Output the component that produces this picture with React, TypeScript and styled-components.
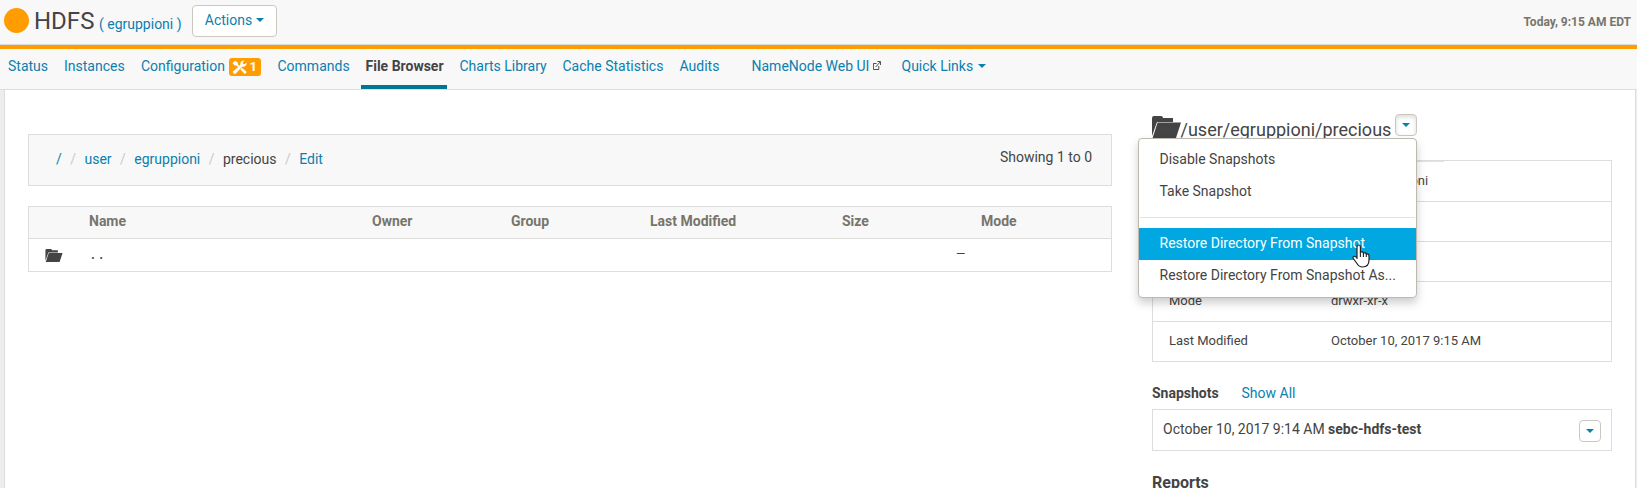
import React from "react";
import styled, { createGlobalStyle, css } from "styled-components";

const C = {
  link: "#0b7fad",
  text: "#444444",
  border: "#dddddb",
  orange: "#ff9c00",
  bar: "#f8f8f8",
};

const Global = createGlobalStyle`
  * { box-sizing: border-box; }
  html, body { margin: 0; padding: 0; height: 100%; overflow: hidden; }
  body {
    background: #eceeee;
    color: ${C.text};
    font: 14px/20px Roboto, "Liberation Sans", sans-serif;
    white-space: nowrap;
  }
`;

const Page = styled.div`
  height: 488px;
  overflow: hidden;
  display: flex;
  flex-direction: column;
`;

const Header = styled.header`
  height: 49px;
  flex: none;
  display: flex;
  align-items: flex-start;
  background: ${C.bar};
  border-bottom: 4px solid ${C.orange};
  box-shadow: inset 0 -1px 0 #dcdcdc;
  padding: 0 6px 0 4px;
`;

const StatusDot = styled.span`
  width: 25px;
  height: 25px;
  margin-top: 8px;
  border-radius: 50%;
  background: ${C.orange};
`;

const Title = styled.h1`
  margin: 6px 0 0 5px;
  width: 65px;
  font-size: 24px;
  line-height: 30px;
  font-weight: 400;
`;

const Cluster = styled.a`
  margin-top: 14px;
  width: 93px;
  color: ${C.link};
`;

const ActionsButton = styled.button`
  width: 85px;
  height: 32px;
  margin-top: 5px;
  padding: 0 0 2px;
  display: flex;
  align-items: center;
  justify-content: center;
  gap: 4px;
  border: 1px solid #cbc8bf;
  border-radius: 4px;
  background: #fff;
  color: ${C.link};
  font: inherit;
`;

const Caret = styled.span`
  border: 4px solid transparent;
  border-top-color: ${C.link};
  border-bottom: 0;
`;

const Clock = styled.span`
  margin: 13px 0 0 auto;
  font-size: 12px;
  line-height: 18px;
  font-weight: 700;
  color: #77756b;
`;

const Nav = styled.nav`
  height: 41px;
  flex: none;
  display: flex;
  padding-left: 3px;
  background: ${C.bar};
  border-bottom: 1px solid ${C.border};
`;

const NavItem = styled.a<{ $w: number; $active?: boolean }>`
  width: ${(p) => p.$w}px;
  height: 40px;
  padding: 7px 0 0 5px;
  display: flex;
  align-items: flex-start;
  color: ${C.link};
  ${(p) =>
    p.$active &&
    css`
      padding-left: 4.5px;
      color: ${C.text};
      font-weight: 700;
      border-bottom: 4px solid #007594;
    `}
`;

const NavGap = styled.span<{ $w: number }>`
  width: ${(p) => p.$w}px;
`;

const Badge = styled.span`
  width: 32px;
  height: 18px;
  margin: 2px 0 0 4px;
  padding: 0 4px 0 3px;
  display: flex;
  align-items: center;
  justify-content: space-between;
  border-radius: 3px;
  background: ${C.orange};
  color: #fff;
  font-weight: 700;
  font-size: 13px;
  line-height: 18px;
`;

const Main = styled.main`
  flex: 1;
  min-height: 0;
  margin: 0 1px 0 4px;
  display: flex;
  background: #fff;
  border: solid ${C.border};
  border-width: 0 1px;
`;

const Browser = styled.section`
  width: 1084px;
  margin: 44px 0 0 23px;
`;

const Crumbs = styled.div`
  height: 52px;
  padding: 14px 19px 0 27px;
  display: flex;
  background: ${C.bar};
  border: 1px solid ${C.border};
`;

const Crumb = styled.a<{ $plain?: boolean }>`
  color: ${(p) => (p.$plain ? C.text : C.link)};
`;

const Slash = styled.span`
  width: 22.7px;
  text-align: center;
  color: #ccc9c2;
`;

const Showing = styled.span`
  margin: -2px 0 0 auto;
`;

const FileTable = styled.div`
  margin-top: 20px;
  border: 1px solid ${C.border};
`;

const FileRow = styled.div<{ $head?: boolean }>`
  height: 32px;
  display: grid;
  grid-template-columns: 60px 283px 139px 139px 192px 139px 1fr;
  ${(p) =>
    p.$head &&
    css`
      background: ${C.bar};
      border-bottom: 1px solid ${C.border};
      color: #77756b;
      font-weight: 700;
    `}
`;

const Cell = styled.span`
  padding-top: 4px;
`;

const ParentCell = styled(Cell)`
  padding: 5px 0 0 2px;
  font-weight: 500;
  word-spacing: 1px;
`;

const DashCell = styled(Cell)`
  padding: 5px 0 0 114px;
  font-size: 12px;
`;

const Side = styled.aside`
  width: 460px;
  margin: 24px 0 0 40px;
`;

const PathRow = styled.div`
  position: relative;
  height: 46px;
  display: flex;
  align-items: flex-start;
`;

const IconFolder = styled.span`
  margin-top: 2px;
  line-height: 0;
`;

const PathText = styled.h2`
  margin: 5px 0 0 -0.5px;
  width: 214.5px;
  font-size: 18px;
  line-height: 22px;
  font-weight: 400;
`;

const CaretButton = styled.button<{ $open?: boolean }>`
  width: 22px;
  height: 22px;
  padding: 0;
  display: flex;
  align-items: center;
  justify-content: center;
  border: 1px solid #cbc8bf;
  border-radius: 4px;
  background: #fff;
  ${(p) => p.$open && css`box-shadow: inset 0 2px 4px rgba(0, 0, 0, 0.15);`}
`;

const Menu = styled.ul`
  position: absolute;
  z-index: 2;
  left: -14px;
  top: 24px;
  width: 279px;
  height: 160px;
  margin: 0;
  padding: 5px 0;
  list-style: none;
  background: #fff;
  border: 1px solid #bdb9b0;
  border-radius: 4px;
  box-shadow: 0 5px 10px rgba(0, 0, 0, 0.2);
`;

const MenuItem = styled.li<{ $hot?: boolean }>`
  height: 32px;
  padding: 5px 20.5px;
  ${(p) => p.$hot && css`background: #00a7e0; color: #fff;`}
`;

const Divider = styled.li`
  height: 1px;
  margin: 9px 1px 10px;
  background: #e3e3e0;
`;

const Pointer = styled.svg`
  position: absolute;
  z-index: 3;
  left: 200px;
  top: 130px;
`;

const Details = styled.div`
  border: 1px solid ${C.border};
`;

const DetailMark = styled.div`
  width: 291px;
  height: 1px;
  margin-bottom: -1px;
  background: #e2e1dc;
`;

const DetailRow = styled.div`
  height: 40px;
  padding: 10px 0 0 16px;
  display: grid;
  grid-template-columns: 162px 1fr;
  font-size: 13px;
  & + & { border-top: 1px solid ${C.border}; padding-top: 9px; }
`;

const SnapHead = styled.div`
  margin-top: 21px;
  display: flex;
`;

const SnapTitle = styled.strong`
  width: 89.5px;
`;

const SnapLink = styled.a`
  color: ${C.link};
`;

const Snapshot = styled.div`
  height: 42px;
  margin-top: 6px;
  padding: 9px 10px 0;
  display: flex;
  justify-content: space-between;
  border: 1px solid ${C.border};
  & > button { margin-top: 1px; }
`;

const Reports = styled.h3`
  margin: 21px 0 0;
  font-size: 16px;
  line-height: 22px;
`;

const Folder = ({ w, h }: { w: number; h: number }) => (
  <svg width={w} height={h} viewBox="0 0 29 22">
    <path fill="#444" d="M0 20V2Q0 0 2 0H9Q11 0 11 2H21V6H5Z" />
    <path fill="#444" d="M5.6 6.6H29L24 22H.6Z" />
  </svg>
);

const SmallFolder = styled.span`
  padding: 10px 0 0 16px;
  line-height: 0;
`;

const Tools = () => (
  <svg width="15" height="14" viewBox="0 0 15 14">
    <path
      fill="#fff"
      d="M.5 3L3 .8L5.8 2.6V4.2L7.8 6L6.3 7.5L4.4 5.5H2.7ZM8.3 9.2L9.8 7.8L14.5 11.8V12.6L13.3 13.8H12.5Z"
    />
    <path
      fill="#fff"
      d="M1 11.4L8.3 5.1Q7.9 2.4 9.9 1Q11.2.2 12.6.5L10.8 2.3L11.2 3.9L12.8 4.2L14.5 2.5Q14.9 4.2 13.6 5.7Q12.1 7.1 10 6.7L3.6 13.7Q2.6 14.3 1.6 13.3Q.5 12.3 1 11.4Z"
    />
  </svg>
);

const External = () => (
  <svg width="8" height="9" viewBox="0 0 9 9" preserveAspectRatio="none" fill="none" stroke="#444">
    <path d="M4 2.5H.5V8.5H6.5V5M3 6L8 1M5 .5H8.5V4" />
  </svg>
);

const IconSlot = styled.span`
  margin: 5px 0 0 4px;
  line-height: 0;
`;

const CaretSlot = styled.span`
  margin: 8px 0 0 5px;
  line-height: 0;
  display: flex;
`;

const columns = ["", "Name", "Owner", "Group", "Last Modified", "Size", "Mode"];
const details = [
  ["Parent", "/user/egruppioni"],
  ["Owner", "egruppioni"],
  ["Group", "egruppioni"],
  ["Mode", "drwxr-xr-x"],
  ["Last Modified", "October 10, 2017 9:15 AM"],
];

export default function App() {
  return (
    <Page>
      <Global />
      <Header>
        <StatusDot />
        <Title>HDFS</Title>
        <Cluster>( egruppioni )</Cluster>
        <ActionsButton>
          Actions <Caret />
        </ActionsButton>
        <Clock>Today, 9:15 AM EDT</Clock>
      </Header>
      <Nav>
        <NavItem $w={56}>Status</NavItem>
        <NavItem $w={77}>Instances</NavItem>
        <NavItem $w={136.5}>
          Configuration
          <Badge>
            <Tools />1
          </Badge>
        </NavItem>
        <NavItem $w={88.5}>Commands</NavItem>
        <NavItem $w={86} $active>File Browser</NavItem>
        <NavGap $w={7.5} />
        <NavItem $w={103}>Charts Library</NavItem>
        <NavItem $w={117}>Cache Statistics</NavItem>
        <NavItem $w={72}>Audits</NavItem>
        <NavItem $w={150}>
          NameNode Web UI
          <IconSlot><External /></IconSlot>
        </NavItem>
        <NavItem $w={100}>
          Quick Links
          <CaretSlot><Caret /></CaretSlot>
        </NavItem>
      </Nav>
      <Main>
        <Browser>
          <Crumbs>
            <Crumb>/</Crumb>
            <Slash>/</Slash>
            <Crumb>user</Crumb>
            <Slash>/</Slash>
            <Crumb>egruppioni</Crumb>
            <Slash>/</Slash>
            <Crumb $plain>precious</Crumb>
            <Slash>/</Slash>
            <Crumb>Edit</Crumb>
            <Showing>Showing 1 to 0</Showing>
          </Crumbs>
          <FileTable>
            <FileRow $head>
              {columns.map((c) => (
                <Cell key={c}>{c}</Cell>
              ))}
            </FileRow>
            <FileRow>
              <SmallFolder><Folder w={18} h={13} /></SmallFolder>
              <ParentCell>. .</ParentCell>
              <Cell />
              <Cell />
              <Cell />
              <DashCell>—</DashCell>
              <Cell />
            </FileRow>
          </FileTable>
        </Browser>
        <Side>
          <PathRow>
            <IconFolder><Folder w={29} h={22} /></IconFolder>
            <PathText>/user/egruppioni/precious</PathText>
            <CaretButton $open><Caret /></CaretButton>
            <Menu>
              <MenuItem>Disable Snapshots</MenuItem>
              <MenuItem>Take Snapshot</MenuItem>
              <Divider />
              <MenuItem $hot>Restore Directory From Snapshot</MenuItem>
              <MenuItem>Restore Directory From Snapshot As...</MenuItem>
            </Menu>
            <Pointer width="18" height="24" viewBox="0 0 18 24">
              <path
                d="M5 15V3Q5 1 6.7 1T8.4 3V8Q11 7.3 11.4 9Q14 8.3 14.3 10Q17 9.5 17 12V16Q17 23 10.5 23Q7 23 5 19.5L1.3 14.5Q.5 13 2 12.3Q3.4 12 5 14Z"
                fill="#fff"
                stroke="#222"
                strokeWidth="1.2"
              />
              <path d="M8.4 8V13M11.4 9V13M14.3 10V13" stroke="#222" strokeWidth="1.1" />
            </Pointer>
          </PathRow>
          <Details>
            <DetailMark />
            {details.map(([k, v]) => (
              <DetailRow key={k}>
                <span>{k}</span>
                <span>{v}</span>
              </DetailRow>
            ))}
          </Details>
          <SnapHead>
            <SnapTitle>Snapshots</SnapTitle>
            <SnapLink>Show All</SnapLink>
          </SnapHead>
          <Snapshot>
            <span>October 10, 2017 9:14 AM <strong>sebc-hdfs-test</strong></span>
            <CaretButton><Caret /></CaretButton>
          </Snapshot>
          <Reports>Reports</Reports>
        </Side>
      </Main>
    </Page>
  );
}
